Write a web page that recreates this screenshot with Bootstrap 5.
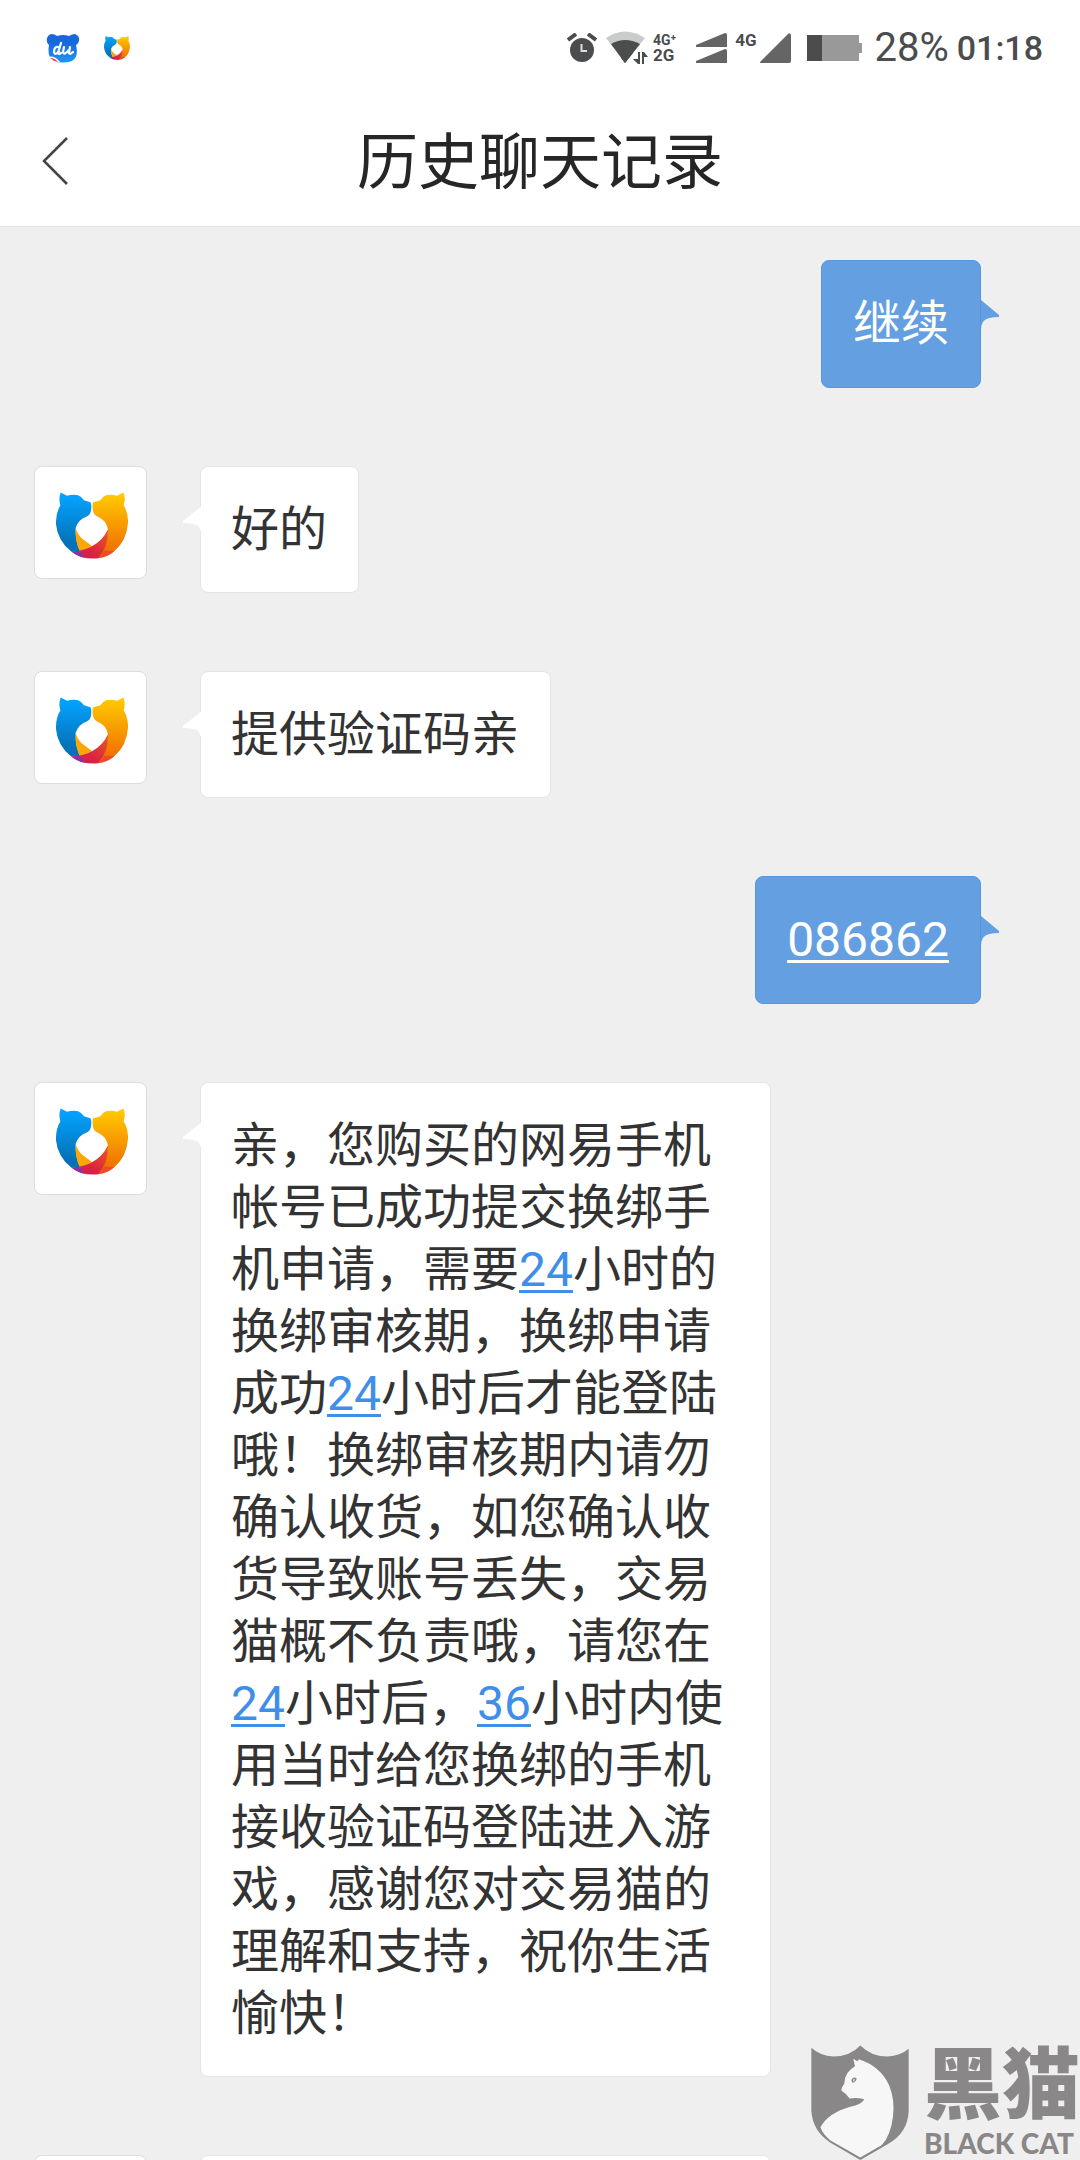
<!DOCTYPE html>
<html lang="zh-CN">
<head>
<meta charset="utf-8">
<meta name="viewport" content="width=device-width, initial-scale=1">
<title>历史聊天记录</title>
<link href="https://cdn.jsdelivr.net/npm/bootstrap@5.3.0/dist/css/bootstrap.min.css" rel="stylesheet">
<style>
  body { font-family: Roboto, "Noto Sans CJK SC", sans-serif; background: #efefef; color: #333; }
  .status-bar { height: 96px; padding: 0 37px 0 46px; color: #4b4c4e; }
  .net-small { font-size: 14px; line-height: 14px; font-weight: 700; }
  .net-large { font-size: 17px; line-height: 17px; font-weight: 700; }
  .battery-text { font-size: 40px; line-height: 48px; }
  .clock-text { font-size: 34px; line-height: 48px; font-weight: 500; }
  .title-bar { height: 130px; padding-top: 4px; }
  .title-bar h1 { font-size: 61px; line-height: 80px; font-weight: 400; color: #262626; }
  .back-btn { left: 32px; top: 32px; width: 48px; height: 64px; }
  .top-area { background: #fff; border-bottom: 1px solid #e2e2e2; }
  .chat-log { padding: 33px 99px 0 34px; gap: 78px; }
  .avatar-box { width: 113px; height: 113px; border: 1px solid #d9dde4; border-radius: 8px; background: #fff; padding: 6px 0 0 2px; }
  .bubble { font-size: 48px; line-height: 62px; border-radius: 8px; position: relative; }
  .bubble a { text-decoration-thickness: 3px; text-underline-offset: 4px; text-decoration-skip-ink: none; }
  .bubble-in { background: #fff; border: 1px solid #e4e5e7; padding: 32px 31px 31px 30px; margin-left: 53px; max-width: 571px; }
  .bubble-in a { color: #3f8fea; }
  .bubble-out { background: #649fe1; border: 1px solid #5596de; color: #fff; padding: 32px 31px; }
  .bubble-out a { color: #fff; }
  .tail-in { position: absolute; left: -18px; top: 39px; }
  .tail-out { position: absolute; right: -19px; top: 39px; }
  .watermark { right: 0; bottom: 0; color: #8a8788; gap: 15px; }
  .mark-cn { font-size: 78px; line-height: 78px; font-weight: 900; }
  .mark-en { font-family: Lato, sans-serif; font-size: 28px; line-height: 34px; font-weight: 900; }
</style>
<script src="https://cdn.jsdelivr.net/npm/bootstrap@5.3.0/dist/js/bootstrap.bundle.min.js"></script>
</head>
<body>
<svg width="0" height="0" class="position-absolute" aria-hidden="true">
  <defs>
    <linearGradient id="gBlue" x1="0" y1="0" x2="0" y2="1"><stop offset=".1" stop-color="#04a0fb"/><stop offset=".85" stop-color="#0372b8"/></linearGradient>
    <linearGradient id="gGold" x1="0" y1="0" x2="0" y2="1"><stop offset=".05" stop-color="#ffc800"/><stop offset=".9" stop-color="#f07000"/></linearGradient>
    <linearGradient id="gRed" x1="0" y1="1" x2="1" y2="0"><stop offset="0" stop-color="#c81e5c"/><stop offset=".4" stop-color="#da2440"/><stop offset="1" stop-color="#ee5a20"/></linearGradient>
    <linearGradient id="gBear" x1="0" y1="0" x2="0" y2="1"><stop offset=".3" stop-color="#1668dc"/><stop offset="1" stop-color="#1e96f4"/></linearGradient>
    <symbol id="catLogo" viewBox="108 128 216 200">
      <path fill="url(#gBlue)" d="M122 129L141 139Q158 134 174 137Q187 142 192 152L211 158Q216 165 213 183Q211 196 200 201Q176 209 167 235Q166 275 180 305L153 305Q113 274 108 224Q107 190 121 168Q115 147 122 129Z"/>
      <path fill="url(#gGold)" d="M310 129L291 139Q274 134 258 137Q247 141 240 153L219 158Q216 167 219 184Q221 197 236 203Q258 212 264 239Q264 252 259 270L235 325Q267 320 285 303Q320 273 324 220Q325 190 311 167Q318 147 310 129Z"/>
      <path fill="#fca706" d="M167 235Q170 251 185 266L217 290L179 305Q164 272 167 235Z"/>
      <path fill="url(#gRed)" d="M153 305Q185 306 216 290Q248 273 264 239Q266 291 235 326Q189 332 153 305Z"/>
      <path fill="#8b31a8" d="M153 305Q167 307 180 304L194 325Q171 320 153 305Z"/>
      <path fill="#ec4b28" d="M253 304L283 305Q262 323 235 326Q246 318 253 304Z"/>
    </symbol>
  </defs>
</svg>

<div class="vh-100 overflow-hidden d-flex flex-column position-relative">
  <div class="top-area flex-shrink-0">
    <div class="status-bar d-flex align-items-center">
      <svg width="34" height="29" viewBox="0 0 34 29" role="img" aria-label="百度">
        <path fill="url(#gBear)" d="M5 0Q9 0 11 2Q17 0 23 2Q26 0 29 0Q34 2 33 7Q32 10 30 11Q33 23 26 27Q17 30 7 27Q1 22 3 11Q0 9 1 4Q2 1 5 0Z"/>
        <g fill="none" stroke="#fff" stroke-width="2.2" stroke-linecap="round"><path d="M15 9L12 19Q12 21 15 19M13 13Q8 12 8 18Q9 22 13 17M18 13L17 18Q18 22 23 16M24 13L23 19Q24 21 27 18"/></g>
        <path fill="#fff" d="M2 23Q8 21 14 28L5 28Z"/><path fill="#ef4154" d="M4 24Q9 24 12 28Q7 27 4 24Z"/>
      </svg>
      <svg width="26" height="24" class="ms-4" role="img" aria-label="交易猫"><use href="#catLogo"/></svg>

      <div class="d-flex align-items-center ms-auto">
        <svg width="30" height="30" viewBox="0 0 30 30" class="me-2" aria-label="闹钟" role="img">
          <circle cx="15" cy="17" r="12" fill="#4b4c4e"/><path d="M14.500 11V18H20" fill="none" stroke="#ddd" stroke-width="2"/>
          <path d="M1 7L9 1M29 7L21 1" stroke="#4b4c4e" stroke-width="4"/>
        </svg>
        <svg width="44" height="34" viewBox="0 0 44 34" class="me-1" aria-label="无线网络" role="img">
          <path fill="#cacccb" d="M1 7Q20 -6 40 7L20 32Z"/><path fill="#4b4c4e" d="M6 13Q20 5 35 13L20 32Z"/>
          <path fill="#fff" d="M28 22H44V34H28Z"/><path fill="#4b4c4e" d="M28 22L20 32L16 27ZM33 21H35V33H33L28 28H33ZM37 33V21H39L43 26H39V33Z"/>
        </svg>
        <div class="d-flex flex-column me-1">
          <span class="net-small">4G⁺</span><span class="net-large">2G</span>
        </div>
        <svg width="31" height="30" viewBox="0 0 31 30" class="ms-3" fill="#656565" aria-label="信号" role="img"><path d="M0 13V12L29 0Q31 0 31 2V14H0ZM0 29V28L29 16Q31 16 31 18V30H0Z"/></svg>
        <span class="net-large mb-3 ms-2">4G</span>
        <svg width="31" height="30" viewBox="0 0 31 30" class="ms-1" fill="#656565" aria-label="信号" role="img"><path d="M1 28L28 1Q31 -1 31 3V28Q31 30 29 30H1Q-1 30 1 28Z"/></svg>
        <svg width="55" height="26" viewBox="0 0 55 26" class="ms-3 me-2" aria-label="电池" role="img"><path fill="#999" d="M15 0H52V8H55V18H52V26H15Z"/><path fill="#4b4c4e" d="M0 0H15V26H0Z"/></svg>
        <span class="battery-text ms-1">28%</span>
        <span class="clock-text ms-2">01:18</span>
      </div>
    </div>
    <header class="title-bar d-flex align-items-center justify-content-center position-relative">
      <button type="button" class="back-btn btn p-0 border-0 position-absolute" aria-label="返回">
        <svg width="48" height="64" viewBox="0 0 48 64"><path d="M35 10L12 33L35 56" fill="none" stroke="#444" stroke-width="2.500"/></svg>
      </button>
      <h1 class="m-0">历史聊天记录</h1>
    </header>
  </div>

  <main class="chat-log d-flex flex-column">
    <div class="d-flex justify-content-end">
      <div class="bubble bubble-out">继续<svg class="tail-out" width="18" height="30" viewBox="0 0 18 30"><path fill="#649fe1" d="M0 0L18 15V17Q5 17 2 22Q0 25 0 30Z"/></svg></div>
    </div>
    <div class="d-flex align-items-start">
      <div class="avatar-box flex-shrink-0 d-flex align-items-center justify-content-center"><svg width="72" height="67"><use href="#catLogo"/></svg></div>
      <div class="bubble bubble-in">好的<svg class="tail-in" width="19" height="30" viewBox="0 0 19 30"><path fill="#fff" d="M19 0L0 15V17Q13 17 16 21Q18 25 19 30Z"/></svg></div>
    </div>
    <div class="d-flex align-items-start">
      <div class="avatar-box flex-shrink-0 d-flex align-items-center justify-content-center"><svg width="72" height="67"><use href="#catLogo"/></svg></div>
      <div class="bubble bubble-in">提供验证码亲<svg class="tail-in" width="19" height="30" viewBox="0 0 19 30"><path fill="#fff" d="M19 0L0 15V17Q13 17 16 21Q18 25 19 30Z"/></svg></div>
    </div>
    <div class="d-flex justify-content-end">
      <div class="bubble bubble-out"><a href="#">086862</a><svg class="tail-out" width="18" height="30" viewBox="0 0 18 30"><path fill="#649fe1" d="M0 0L18 15V17Q5 17 2 22Q0 25 0 30Z"/></svg></div>
    </div>
    <div class="d-flex align-items-start">
      <div class="avatar-box flex-shrink-0 d-flex align-items-center justify-content-center"><svg width="72" height="67"><use href="#catLogo"/></svg></div>
      <div class="bubble bubble-in">亲，您购买的网易手机帐号已成功提交换绑手机申请，需要<a href="#">24</a>小时的换绑审核期，换绑申请成功<a href="#">24</a>小时后才能登陆哦！换绑审核期内请勿确认收货，如您确认收货导致账号丢失，交易猫概不负责哦，请您在<a href="#">24</a>小时后，<a href="#">36</a>小时内使用当时给您换绑的手机接收验证码登陆进入游戏，感谢您对交易猫的理解和支持，祝你生活愉快！<svg class="tail-in" width="19" height="30" viewBox="0 0 19 30"><path fill="#fff" d="M19 0L0 15V17Q13 17 16 21Q18 25 19 30Z"/></svg></div>
    </div>
    <div class="d-flex align-items-start">
      <div class="avatar-box flex-shrink-0"></div>
      <div class="bubble bubble-in w-100">&nbsp;</div>
    </div>
  </main>

  <div class="watermark position-absolute d-flex align-items-end">
    <svg width="98" height="115" viewBox="93 75 292 342" aria-label="黑猫" role="img">
      <path fill="#8a8788" d="M94 83Q120 107 160 109Q210 108 240 76Q273 109 320 109Q360 107 384 86V270Q382 338 320 371L240 417L150 365Q97 330 94 270Z"/>
      <path fill="#f7f7f7" d="M121 320Q145 277 210 259Q243 252 252 236Q230 231 208 234Q199 220 184 211Q182 204 192 190Q193 155 224 138L219 116L231 123L236 117Q300 138 326 195Q344 240 337 290Q330 345 304 373L240 410L151 359Q128 341 121 320Z"/>
      <path fill="#8a8788" d="M213 179Q220 168 229 174Q228 186 216 187Z"/><path fill="#f7f7f7" d="M219 175L224 178L219 185Z"/>
    </svg>
    <div class="d-flex flex-column">
      <span class="mark-cn">黑猫</span><span class="mark-en">BLACK CAT</span>
    </div>
  </div>
</div>
</body>
</html>
